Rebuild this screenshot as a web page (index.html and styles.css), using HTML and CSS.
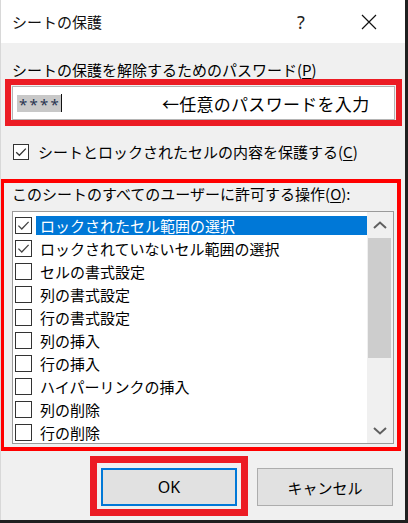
FILE: index.html
```html
<!DOCTYPE html>
<html lang="ja">
<head>
<meta charset="utf-8">
<title>シートの保護</title>
<link rel="stylesheet" href="styles.css">
</head>
<body>
<div class="window">
  <div class="titlebar">
    <span class="title">シートの保護</span>
    <span class="help">?</span>
    <span class="close"><svg width="16" height="16" viewBox="0 0 16 16"><path d="M1 1L15 15M15 1L1 15" stroke="#111" stroke-width="1.2" fill="none"/></svg></span>
  </div>
  <div class="content">
    <div class="label1">シートの保護を解除するためのパスワード(<u>P</u>)</div>
    <div class="redbox1">
      <div class="input">
        <span class="sel">****</span><span class="caret"></span>
        <span class="note">←任意のパスワードを入力</span>
      </div>
    </div>
    <div class="checkrow">
      <svg class="cb" width="16" height="16" viewBox="0 0 16 16"><rect x="0.5" y="0.5" width="15" height="15" fill="#fff" stroke="#333"/><path d="M3.2 8.2L6.4 11.3L12.8 4.6" stroke="#333" stroke-width="1.3" fill="none"/></svg>
      <span class="checktext">シートとロックされたセルの内容を保護する(<u>C</u>)</span>
    </div>
    <div class="redbox2">
      <div class="label2">このシートのすべてのユーザーに許可する操作(<u>O</u>):</div>
      <div class="listbox">
        <div class="items">
          <div class="row"><svg class="cb" width="17" height="17" viewBox="0 0 17 17"><rect x="0.5" y="0.5" width="16" height="16" fill="#fff" stroke="#333"/><path d="M3.4 8.6L6.8 12L13.6 4.9" stroke="#444" stroke-width="1.3" fill="none"/></svg><span class="text selected">ロックされたセル範囲の選択</span></div>
          <div class="row"><svg class="cb" width="17" height="17" viewBox="0 0 17 17"><rect x="0.5" y="0.5" width="16" height="16" fill="#fff" stroke="#333"/><path d="M3.4 8.6L6.8 12L13.6 4.9" stroke="#444" stroke-width="1.3" fill="none"/></svg><span class="text">ロックされていないセル範囲の選択</span></div>
          <div class="row"><svg class="cb" width="17" height="17" viewBox="0 0 17 17"><rect x="0.5" y="0.5" width="16" height="16" fill="#fff" stroke="#333"/></svg><span class="text">セルの書式設定</span></div>
          <div class="row"><svg class="cb" width="17" height="17" viewBox="0 0 17 17"><rect x="0.5" y="0.5" width="16" height="16" fill="#fff" stroke="#333"/></svg><span class="text">列の書式設定</span></div>
          <div class="row"><svg class="cb" width="17" height="17" viewBox="0 0 17 17"><rect x="0.5" y="0.5" width="16" height="16" fill="#fff" stroke="#333"/></svg><span class="text">行の書式設定</span></div>
          <div class="row"><svg class="cb" width="17" height="17" viewBox="0 0 17 17"><rect x="0.5" y="0.5" width="16" height="16" fill="#fff" stroke="#333"/></svg><span class="text">列の挿入</span></div>
          <div class="row"><svg class="cb" width="17" height="17" viewBox="0 0 17 17"><rect x="0.5" y="0.5" width="16" height="16" fill="#fff" stroke="#333"/></svg><span class="text">行の挿入</span></div>
          <div class="row"><svg class="cb" width="17" height="17" viewBox="0 0 17 17"><rect x="0.5" y="0.5" width="16" height="16" fill="#fff" stroke="#333"/></svg><span class="text">ハイパーリンクの挿入</span></div>
          <div class="row"><svg class="cb" width="17" height="17" viewBox="0 0 17 17"><rect x="0.5" y="0.5" width="16" height="16" fill="#fff" stroke="#333"/></svg><span class="text">列の削除</span></div>
          <div class="row"><svg class="cb" width="17" height="17" viewBox="0 0 17 17"><rect x="0.5" y="0.5" width="16" height="16" fill="#fff" stroke="#333"/></svg><span class="text">行の削除</span></div>
        </div>
        <div class="scrollbar">
          <div class="arrow"><svg width="14" height="8" viewBox="0 0 14 8"><path d="M1 7L7 1.5L13 7" stroke="#606060" stroke-width="2" fill="none"/></svg></div>
          <div class="thumb"></div>
          <div class="track"></div>
          <div class="arrow"><svg width="14" height="8" viewBox="0 0 14 8"><path d="M1 1L7 6.5L13 1" stroke="#606060" stroke-width="2" fill="none"/></svg></div>
        </div>
      </div>
    </div>
    <div class="buttons">
      <div class="okbox"><div class="btn ok">OK</div></div>
      <div class="btn cancel">キャンセル</div>
    </div>
  </div>
</div>
</body>
</html>
```
FILE: styles.css
```css
html, body {
  margin: 0;
  padding: 0;
}
body {
  background: #1f1f1f;
  width: 408px;
  height: 523px;
  overflow: hidden;
  font-family: "Noto Sans CJK JP", "Noto Sans", sans-serif;
  font-size: 15px;
  color: #000;
}
.window {
  width: 405px;
  height: 520px;
  background: #f0f0f0;
  display: flex;
  flex-direction: column;
  overflow: hidden;
  box-sizing: border-box;
  border-left: 1px solid #d8d8d8;
}
.titlebar {
  height: 43px;
  flex: none;
  background: #fff;
  display: flex;
  align-items: center;
  padding-left: 11px;
}
.title {
  font-size: 15px;
  color: #111;
}
.help {
  margin-left: auto;
  width: 20px;
  text-align: center;
  font-family: "Noto Sans", sans-serif;
  font-size: 18px;
  color: #222;
  margin-right: 43px;
}
.close {
  width: 30px;
  display: flex;
  justify-content: center;
  margin-right: 21px;
}
.content {
  flex: 1;
  display: flex;
  flex-direction: column;
}
u {
  text-decoration-thickness: 1px;
  text-underline-offset: 2px;
}
.label1 {
  margin: 17px 0 0 11px;
  line-height: 19px;
  height: 19px;
}
.redbox1 {
  margin: 0 3px 0 4px;
  border: 6px solid #ec1c24;
  padding: 1px 1px 0 1px;
}
.input {
  height: 34px;
  box-sizing: border-box;
  border: 1px solid #b4b4b4;
  background: #fff;
  display: flex;
  align-items: center;
  padding-left: 4px;
}
.sel {
  background: #c8c8c8;
  height: 17px;
  line-height: 19px;
  font-family: "Noto Sans", sans-serif;
  font-size: 15px;
  letter-spacing: 2.2px;
  padding-left: 2px;
  color: #2a3550;
}
.caret {
  width: 1px;
  height: 18px;
  background: #111;
}
.note {
  margin-left: 100px;
  font-size: 17px;
  color: #000;
  letter-spacing: 0.3px;
}
.checkrow {
  margin-top: 16px;
  height: 20px;
  display: flex;
  align-items: center;
  padding-left: 12px;
}
.checkrow .cb {
  flex: none;
}
.checktext {
  margin-left: 9px;
  line-height: 20px;
}
.redbox2 {
  margin: 17px 4px 0 -1px;
  border: 4px solid #ff0000;
  padding: 1px 0 3px 0;
}
.label2 {
  padding-left: 8px;
  line-height: 20px;
  height: 20px;
}
.listbox {
  margin: 7px 0 0 8px;
  width: 382px;
  height: 233px;
  box-sizing: border-box;
  border: 1px solid #9a9a9a;
  background: #fff;
  display: flex;
  overflow: hidden;
}
.items {
  flex: 1;
  padding-top: 2px;
  overflow: hidden;
}
.row {
  height: 23px;
  display: flex;
  align-items: center;
  padding-left: 2px;
}
.row .cb {
  flex: none;
}
.text {
  flex: 1;
  margin-left: 4px;
  padding-left: 4px;
  height: 19px;
  line-height: 19px;
  white-space: nowrap;
}
.text.selected {
  background: #0078d7;
  color: #fff;
}
.scrollbar {
  width: 26px;
  flex: none;
  background: #f0f0f0;
  display: flex;
  flex-direction: column;
}
.arrow {
  height: 25px;
  flex: none;
  display: flex;
  align-items: center;
  justify-content: center;
}
.thumb {
  height: 120px;
  margin: 1px 2px 0 1px;
  background: #cdcdcd;
  flex: none;
}
.track {
  flex: 1;
}
.buttons {
  margin-top: 5px;
  display: flex;
  align-items: flex-start;
  padding-left: 89px;
}
.okbox {
  border: 7px solid #ec1c24;
  padding: 5px 4px 3px 4px;
}
.btn {
  width: 136px;
  height: 38px;
  box-sizing: border-box;
  background: #e1e1e1;
  display: flex;
  align-items: center;
  justify-content: center;
  font-size: 15px;
}
.btn.ok {
  border: 2px solid #0078d7;
  font-family: "Noto Sans", sans-serif;
  font-size: 16px;
}
.btn.cancel {
  border: 1px solid #adadad;
  margin: 12px 0 0 9px;
}
```
